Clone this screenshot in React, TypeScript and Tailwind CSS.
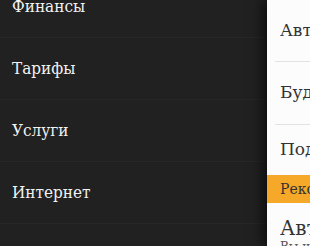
import React from "react";

const leftItems = ["Финансы", "Тарифы", "Услуги", "Интернет", "Роуминг"];

export default function App() {
  return (
    <div className="flex w-[310px] h-[246px] overflow-hidden bg-[#212121]">
      <div className="w-[267px] shrink-0 flex flex-col -mt-[24px]">
        {leftItems.map((t) => (
          <div
            key={t}
            className="h-[62px] shrink-0 flex items-center pl-[12px] border-b border-[#272727] text-[17px] text-[#f2f2f2]"
            style={{ fontFamily: '"DejaVu Serif Condensed", "DejaVu Serif", serif' }}
          >
            {t}
          </div>
        ))}
      </div>
      <div
        className="w-[300px] shrink-0 bg-[#fcfcfc] flex flex-col shadow-[-5px_0_12px_rgba(0,0,0,0.6)] text-[#333333]"
        style={{ fontFamily: '"DejaVu Serif", serif' }}
      >
        <div className="mx-[8px] h-[62px] shrink-0 flex items-center pl-[5px] border-b border-[#e2e2e2] text-[17px]">
          Автоплатёж
        </div>
        <div className="mx-[8px] h-[63px] shrink-0 flex items-center pl-[5px] border-b border-[#e2e2e2] text-[17px]">
          Будь в плюсе
        </div>
        <div className="h-[50px] shrink-0 flex items-center pl-[13px] text-[17px]">
          Подписки
        </div>
        <div className="h-[28px] shrink-0 flex items-center pl-[13px] bg-[#f6a828] text-[14px]">
          Рекомендуемые
        </div>
        <div className="pl-[13px] pt-[13px] flex flex-col">
          <div className="text-[20px] leading-[24px]">Автооплата</div>
          <div className="text-[12px] leading-[14px] text-[#555]">Вы используете</div>
        </div>
      </div>
    </div>
  );
}
